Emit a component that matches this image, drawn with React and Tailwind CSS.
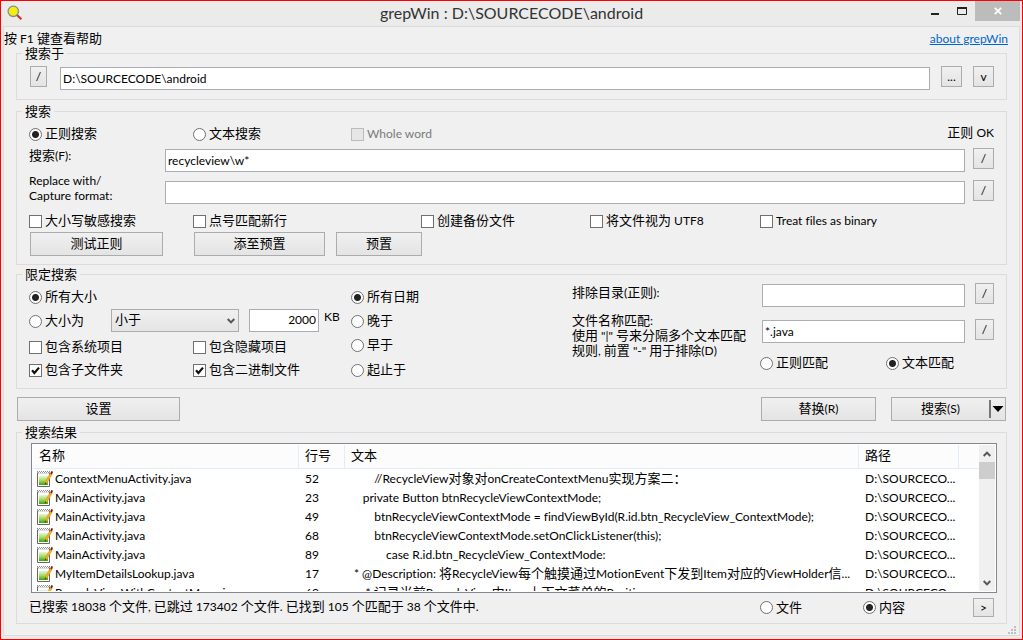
import React from "react";

const face = "bg-gradient-to-b from-[#f0f0f0] to-[#e4e4e4]";
const control = "border border-[#acacac]";

/* Latin runs are set one pixel smaller than the Chinese ones; leading blanks keep the wider CJK space. */
function T({ children }) {
  const [, indent, body] = children.match(/^(\s*)(.*)$/);
  return (
    <>
      {indent && <span className="whitespace-pre font-['Noto_Sans_CJK_SC',sans-serif]">{indent}</span>}
      {body.split(/([\u3000-\u9fff\uff00-\uffef]+)/).map((run, i) =>
        i % 2 ? run : run && <span key={i} className="text-[12px]">{run}</span>
      )}
    </>
  );
}

function Field({ id, label, value = "", className = "" }) {
  return (
    <div className={`min-w-0 pt-px ${className}`}>
      <input
        id={id}
        type="text"
        aria-label={label}
        defaultValue={value}
        className="block h-[23px] w-full rounded-none border border-[#abadb3] bg-white px-0.5 pb-px text-[12px] outline-none"
      />
    </div>
  );
}

function Push({ children, className = "", ...rest }) {
  return (
    <button
      type="button"
      className={`flex shrink-0 items-center justify-center pb-0.5 ${control} ${face} ${className}`}
      {...rest}
    >
      {children}
    </button>
  );
}

function Small({ children, label, className = "h-[21px] w-[21px]" }) {
  return (
    <button
      type="button"
      aria-label={label}
      className={`flex shrink-0 items-center justify-center text-[12px] ${control} ${face} ${className}`}
    >
      {children}
    </button>
  );
}

function Radio({ name, label, checked = false, className = "" }) {
  return (
    <label className={`flex items-center gap-[3px] whitespace-nowrap ${className}`}>
      <input
        type="radio"
        name={name}
        defaultChecked={checked}
        className="h-[13px] w-[13px] shrink-0 appearance-none rounded-full border border-[#707070] bg-white checked:bg-[radial-gradient(circle,#222_3px,#fff_4px)]"
      />
      <span className="pb-px"><T>{label}</T></span>
    </label>
  );
}

function Check({ label, checked = false, disabled = false, className = "" }) {
  return (
    <label
      className={`flex items-center gap-[3px] whitespace-nowrap ${disabled ? "text-[#7a7a7a]" : ""} ${className}`}
    >
      <span className="grid shrink-0">
        <input
          type="checkbox"
          defaultChecked={checked}
          disabled={disabled}
          className="peer h-[13px] w-[13px] appearance-none border border-[#707070] bg-white [grid-area:1/1] disabled:border-[#bcbcbc] disabled:bg-[#e6e6e6]"
        />
        <svg
          viewBox="0 0 13 13"
          className="pointer-events-none hidden h-[13px] w-[13px] [grid-area:1/1] peer-checked:block"
        >
          <path d="M3 6.2 L5.4 9 L10 3.6" fill="none" stroke="#111" strokeWidth="2.2" />
        </svg>
      </span>
      <span className="pb-px"><T>{label}</T></span>
    </label>
  );
}

function Group({ title, className = "", children }) {
  return (
    <fieldset className={`min-w-0 border border-[#dcdcdc] ${className}`}>
      <legend className="ml-[5px] h-[15px] px-[3px] leading-[14px]">{title}</legend>
      {children}
    </fieldset>
  );
}

function Chevron({ up = false }) {
  return (
    <svg viewBox="0 0 8 6" className="h-[6px] w-[8px]">
      <path
        d={up ? "M0.7 5 L4 1.6 L7.3 5" : "M0.7 1 L4 4.4 L7.3 1"}
        fill="none"
        stroke="#555"
        strokeWidth="2"
      />
    </svg>
  );
}

function Magnifier() {
  return (
    <svg viewBox="0 0 16 16" className="h-4 w-4">
      <path d="M10.5 10.5 L14.4 14.2" stroke="#d8302a" strokeWidth="2.2" />
      <circle cx="6.3" cy="6.3" r="5.2" fill="#f4ee10" stroke="#8c8c86" strokeWidth="1.3" />
      <path d="M9.9 9.9 L11.3 11.3" stroke="#666" strokeWidth="1.6" />
    </svg>
  );
}

function FileIcon() {
  return (
    <svg viewBox="0 0 16 16" className="h-4 w-4 shrink-0">
      <defs>
        <linearGradient id="sheet" x1="0" y1="0" x2="0" y2="1">
          <stop offset="0" stopColor="#e6f6d6" />
          <stop offset="0.5" stopColor="#a2dc5c" />
          <stop offset="1" stopColor="#3da010" />
        </linearGradient>
      </defs>
      <path d="M0.5 1.5 V15.5 H12.5 V1.5" fill="#fff" stroke="#666" />
      <path d="M2 5 H11 V14 H2 Z" fill="url(#sheet)" />
      <path d="M0 0.5 H13" stroke="#8a8a8a" strokeDasharray="1 1" />
      <path d="M1 1.5 H12" stroke="#9a9a9a" strokeDasharray="1 1" />
      <path d="M1 2.5 H12" stroke="#dedede" />
      <path d="M7.8 13 L8.6 10.2 L13 2.6 L15 3.6 L10.4 11.4 Z" fill="#f8b024" stroke="#c87808" strokeWidth="0.4" />
      <path d="M7.6 13.8 L8.2 11.6 L9.5 12.3 Z" fill="#4a3213" />
      <path d="M13.2 2.6 L14.4 0 L16 0.8 L15 3.6 Z" fill="#8e1010" />
    </svg>
  );
}

const rows = [
  ["ContextMenuActivity.java", "52", "        //RecycleView对象对onCreateContextMenu实现方案二："],
  ["MainActivity.java", "23", "    private Button btnRecycleViewContextMode;"],
  ["MainActivity.java", "49", "        btnRecycleViewContextMode = findViewById(R.id.btn_RecycleView_ContextMode);"],
  ["MainActivity.java", "68", "        btnRecycleViewContextMode.setOnClickListener(this);"],
  ["MainActivity.java", "89", "            case R.id.btn_RecycleView_ContextMode:"],
  ["MyItemDetailsLookup.java", "17", " * @Description: 将RecycleView每个触摸通过MotionEvent下发到Item对应的ViewHolder信..."],
  ["RecycleViewWithContextMenu.java", "60", "     * 记录当前RecycleView中Item上下文菜单的Position"],
];

function Results() {
  const head = "h-6 border-b border-r border-[#e3edf8] bg-[#fcfcfc] p-0 pb-0.5 pl-[6px] text-left font-normal";
  const cell = "whitespace-nowrap p-0 pl-[6px] align-top leading-[18px]";
  return (
    <div className="ml-[14px] mr-[9px] flex min-h-0 flex-1 overflow-hidden border border-[#828790] bg-white p-px">
      <div className="min-h-0 min-w-0 flex-1 overflow-hidden">
        <table className="w-full table-fixed border-separate border-spacing-0">
          <colgroup>
            <col className="w-[266px]" />
            <col className="w-[46px]" />
            <col />
            <col className="w-[100px]" />
            <col className="w-[20px]" />
          </colgroup>
          <thead>
            <tr>
              <th className={head}>名称</th>
              <th className={head}>行号</th>
              <th className={head}>文本</th>
              <th className={head}>路径</th>
              <td className="border-b border-[#e3edf8] bg-[#fcfcfc] p-0" />
            </tr>
          </thead>
          <tbody>
            {rows.map(([name, line, text], i) => (
              <tr key={i} className="h-[19px]">
                <td className="p-0 pl-1 align-top">
                  <div className="flex items-center gap-0.5 whitespace-nowrap leading-[18px]">
                    <FileIcon />
                    <div><T>{name}</T></div>
                  </div>
                </td>
                <td className={cell}><T>{line}</T></td>
                <td className={`overflow-hidden ${cell}`}><T>{text}</T></td>
                <td className={cell}><T>D:\SOURCECO...</T></td>
                <td className="p-0" />
              </tr>
            ))}
          </tbody>
        </table>
      </div>
      <div className="flex w-4 shrink-0 flex-col items-center bg-[#f0f0f0]">
        <button type="button" aria-label="Scroll up" className="flex h-[17px] w-full items-center justify-center">
          <Chevron up />
        </button>
        <div className="h-[17px] w-full bg-[#cdcdcd]" />
        <div className="flex-1" />
        <button type="button" aria-label="Scroll down" className="flex h-[17px] w-full items-center justify-center">
          <Chevron />
        </button>
      </div>
    </div>
  );
}

function TitleBar() {
  return (
    <header className="grid h-[25px] grid-cols-[1fr_auto_1fr] items-start">
      <div className="pl-1 pt-1">
        <Magnifier />
      </div>
      <h1 className="text-[16px] leading-6 text-[#333]">grepWin : D:\SOURCECODE\android</h1>
      <div className="flex justify-end">
        <button type="button" aria-label="Minimize" className="flex h-5 w-[27px] items-center justify-center">
          <svg viewBox="0 0 10 10" className="h-[10px] w-[10px]">
            <path d="M1 8 H9" stroke="#222" strokeWidth="2" />
          </svg>
        </button>
        <button type="button" aria-label="Maximize" className="flex h-5 w-[27px] items-center justify-center">
          <svg viewBox="0 0 10 10" className="h-[10px] w-[10px]">
            <path d="M0.5 2 V8.5 H9.5 V2" fill="none" stroke="#222" />
            <path d="M0 2 H10" stroke="#222" strokeWidth="2" />
          </svg>
        </button>
        <button type="button" aria-label="Close" className="flex h-5 w-[45px] items-center justify-center bg-[#bcbcbc]">
          <svg viewBox="0 0 8 8" className="h-2 w-2">
            <path d="M0.8 0.8 L7.2 7.2 M7.2 0.8 L0.8 7.2" stroke="#fff" strokeWidth="1.8" />
          </svg>
        </button>
      </div>
    </header>
  );
}

export default function App() {
  return (
    <div className="flex h-screen flex-col overflow-hidden border border-[#ff0000] bg-[#ebebeb] px-0.5 pb-[3px] font-['Lato','Noto_Sans_CJK_SC',sans-serif] text-[13px] leading-[15px] text-black [font-variant-ligatures:none]">
      <TitleBar />
      <main className="flex min-h-0 flex-1 flex-col border border-[#dcdcdc] bg-[#f0f0f0]">
        <div className="flex h-[19px] shrink-0 items-end justify-between pr-[11px]">
          <span><T>按 F1 键查看帮助</T></span>
          <a href="#about" className="text-[12px] text-[#0066cc] underline">
            about grepWin
          </a>
        </div>

        <div className="flex min-h-0 flex-1 flex-col px-3">
          <Group title="搜索于">
            <div className="flex items-start gap-[11px] pb-[9px] pl-[13px] pr-3 pt-[5px]">
              <Small label="Path pattern" className="mr-0.5 h-[21px] w-[17px]">/</Small>
              <Field label="搜索于" value="D:\SOURCECODE\android" className="flex-1" />
              <Small label="Browse">...</Small>
              <Small label="History">v</Small>
            </div>
          </Group>

          <Group title="搜索" className="mt-1">
            <div className="flex flex-col pb-2 pl-3 pr-3 pt-[7px]">
              <div className="flex h-4 items-center">
                <Radio name="mode" label="正则搜索" checked className="w-[164px]" />
                <Radio name="mode" label="文本搜索" className="w-[158px]" />
                <Check label="Whole word" disabled />
                <span className="flex-1 pb-1 text-right"><T>正则 OK</T></span>
              </div>
              <div className="mt-[6px] flex items-start">
                <label htmlFor="search" className="w-[136px]"><T>搜索(F):</T></label>
                <Field id="search" value="recycleview\w*" className="flex-1" />
                <Small label="Edit search" className="ml-2 h-[21px] w-[21px]">/</Small>
              </div>
              <div className="mt-px flex items-end">
                <label htmlFor="replace" className="w-[136px] pb-px">
                  <T>Replace with/</T>
                  <br />
                  <T>Capture format:</T>
                </label>
                <div className="flex flex-1 items-start">
                  <Field id="replace" className="flex-1" />
                  <Small label="Edit replacement" className="ml-2 h-[21px] w-[21px]">/</Small>
                </div>
              </div>
              <div className="mt-[9px] flex h-4 items-center">
                <Check label="大小写敏感搜索" className="w-[164px]" />
                <Check label="点号匹配新行" className="w-[228px]" />
                <Check label="创建备份文件" className="w-[169px]" />
                <Check label="将文件视为 UTF8" className="w-[170px]" />
                <Check label="Treat files as binary" />
              </div>
              <div className="mt-[3px] flex gap-[11px] pl-px">
                <Push className="mr-5 h-6 w-[133px]">测试正则</Push>
                <Push className="h-6 w-[131px]">添至预置</Push>
                <Push className="h-6 w-[86px]">预置</Push>
              </div>
            </div>
          </Group>

          <Group title="限定搜索" className="mt-0.5">
            <div className="flex h-[106px] items-start pl-3 pr-3">
              <div className="w-[322px] pt-[3px]">
                <Radio name="size" label="所有大小" checked className="h-6" />
                <div className="flex h-6 items-start">
                  <Radio name="size" label="大小为" className="h-6 w-[82px]" />
                  <div className="grid w-[128px] items-center">
                    <select
                      aria-label="Size comparison"
                      className={`h-[23px] w-full appearance-none rounded-none pb-0.5 pl-[3px] [grid-area:1/1] ${control} ${face}`}
                    >
                      <option>小于</option>
                    </select>
                    <span className="pointer-events-none mr-1 justify-self-end [grid-area:1/1]">
                      <Chevron />
                    </span>
                  </div>
                  <input
                    type="text"
                    aria-label="Size in KB"
                    defaultValue="2000"
                    className="ml-[10px] h-[23px] w-[70px] border border-[#abadb3] bg-white px-0.5 pb-0.5 text-right text-[12px] outline-none"
                  />
                  <span className="ml-[5px] text-[12px]">KB</span>
                </div>
                <div className="flex h-7 items-center">
                  <Check label="包含系统项目" className="w-[164px]" />
                  <Check label="包含隐藏项目" />
                </div>
                <div className="flex h-[18px] items-center">
                  <Check label="包含子文件夹" checked className="w-[164px]" />
                  <Check label="包含二进制文件" checked />
                </div>
              </div>
              <div className="w-[120px] pt-[3px]">
                <Radio name="date" label="所有日期" checked className="h-6" />
                <Radio name="date" label="晚于" className="h-6" />
                <Radio name="date" label="早于" className="h-6" />
                <Radio name="date" label="起止于" className="h-[26px]" />
              </div>
              <div className="flex flex-1 justify-end">
                <div className="flex w-[188px] flex-col gap-[13px] whitespace-nowrap pt-[3px]">
                  <label htmlFor="exclude"><T>排除目录(正则):</T></label>
                  <label htmlFor="names">
                    <T>文件名称匹配:</T>
                    <br />
                    <T>使用 "|" 号来分隔多个文本匹配</T>
                    <br />
                    <T>规则, 前置 "-" 用于排除(D)</T>
                  </label>
                </div>
                <div className="flex w-[234px] flex-col gap-3 pt-px">
                  <div className="flex items-start gap-[10px] pl-0.5">
                    <Field id="exclude" className="flex-1" />
                    <Small label="Edit exclusion" className="h-[21px] w-[19px]">/</Small>
                  </div>
                  <div className="flex items-start gap-[10px] pl-0.5">
                    <Field id="names" value="*.java" className="flex-1" />
                    <Small label="Edit file names" className="h-[21px] w-[19px]">/</Small>
                  </div>
                  <div className="flex h-4 items-center">
                    <Radio name="match" label="正则匹配" className="w-[126px]" />
                    <Radio name="match" label="文本匹配" checked />
                  </div>
                </div>
              </div>
            </div>
          </Group>

          <div className="mt-2 flex shrink-0 px-px">
            <Push className="h-6 w-[163px]">设置</Push>
            <div className="flex-1" />
            <Push className="h-6 w-[115px]"><T>替换(R)</T></Push>
            <div className={`ml-[15px] flex h-6 w-[115px] items-center ${control} ${face}`}>
              <button type="button" className="h-full flex-1 pb-0.5"><T>搜索(S)</T></button>
              <span className="h-[18px] w-0.5 bg-[#777]" />
              <button type="button" aria-label="More search options" className="flex h-full w-[14px] items-center justify-center">
                <svg viewBox="0 0 12 6" className="h-[6px] w-3">
                  <path d="M0.5 0 H11.5 L6 6 Z" fill="#000" />
                </svg>
              </button>
            </div>
          </div>

          <Group title="搜索结果" className="mt-1 flex min-h-0 flex-1 flex-col">
            <div className="h-[3px] shrink-0" />
            <Results />
            <div className="mb-[6px] mt-[5px] flex h-[19px] shrink-0 items-center pl-3 pr-3">
              <span className="flex-1 pb-0.5">
                <T>已搜索 18038 个文件, 已跳过 173402 个文件. 已找到 105 个匹配于 38 个文件中.</T>
              </span>
              <Radio name="view" label="文件" className="w-[103px]" />
              <Radio name="view" label="内容" checked className="w-[110px]" />
              <Small label="Next" className="h-[19px] w-[21px]">&gt;</Small>
            </div>
          </Group>
          <div className="flex h-[11px] shrink-0 items-end justify-end">
            <svg viewBox="0 0 8 8" className="relative left-[9px] mb-px h-2 w-2">
              <path
                d="M6 0h2v2h-2z M3 3h2v2h-2z M6 3h2v2h-2z M0 6h2v2h-2z M3 6h2v2h-2z M6 6h2v2h-2z"
                fill="#bfbfbf"
              />
            </svg>
          </div>
        </div>
      </main>
    </div>
  );
}
